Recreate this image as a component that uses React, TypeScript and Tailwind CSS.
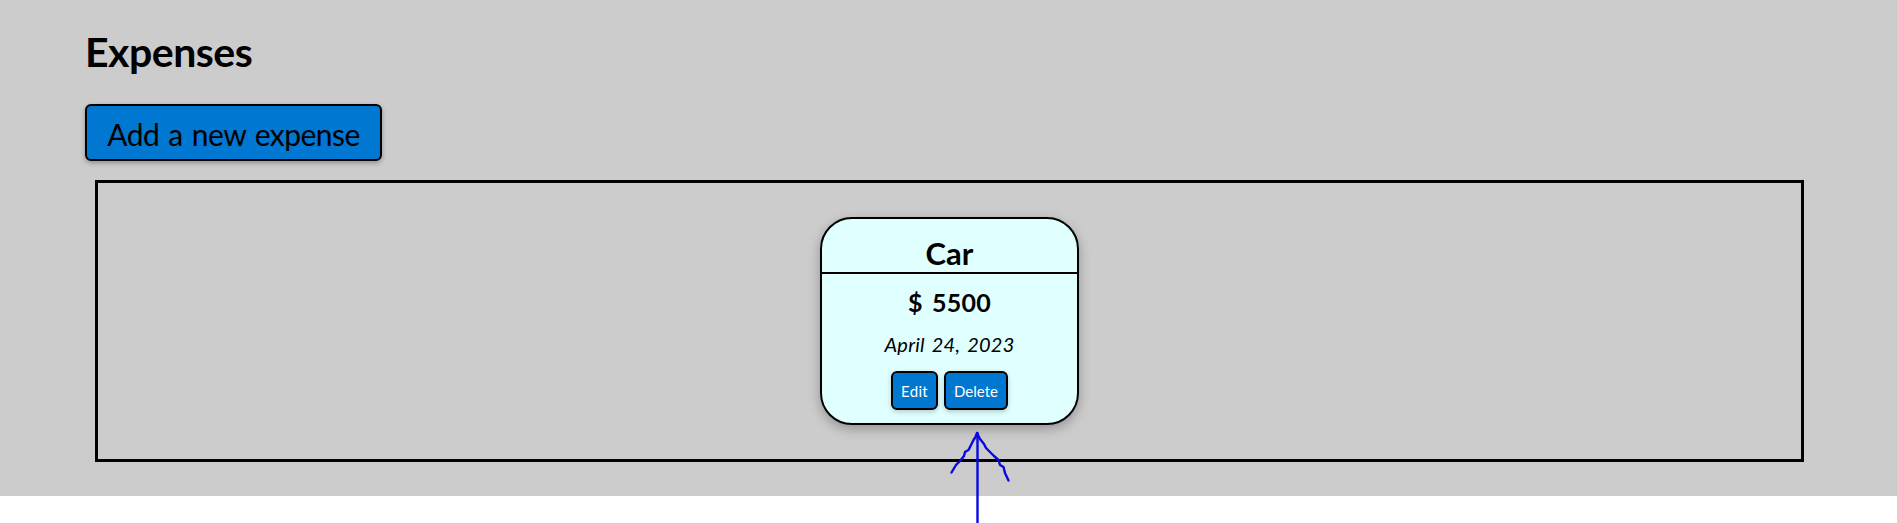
import React from "react";

type Expense = { title: string; amount: number; date: string };

const expenses: Expense[] = [{ title: "Car", amount: 5500, date: "April 24, 2023" }];

function ActionButton({ label, className }: { label: string; className: string }) {
  return (
    <button
      className={`h-[39px] rounded-[6px] border-2 border-black bg-[#0077d0] pt-[2px] text-center text-[15px] whitespace-nowrap text-white shadow-[0_2px_5px_rgba(0,0,0,0.2)] ${className}`}
    >
      {label}
    </button>
  );
}

function ExpenseCard({ expense }: { expense: Expense }) {
  return (
    <article className="flex h-[208px] w-[259px] flex-col items-center rounded-[32px] border-2 border-black bg-[#e0ffff] shadow-[0_4px_12px_rgba(0,0,0,0.28)]">
      <h2 className="h-[55px] w-full border-b-2 border-black pt-[13px] text-center text-[31px] leading-[42px] font-bold">
        {expense.title}
      </h2>
      <p className="mt-[11px] h-[34px] text-[25px] leading-[34px] font-bold tracking-[0.2px] [word-spacing:3px]">
        $ {expense.amount}
      </p>
      <p className="mt-[11px] h-[28px] text-[20px] leading-[28px] tracking-[0.25px] [word-spacing:2px] italic">
        {expense.date}
      </p>
      <div className="mt-[13px] flex gap-[6px]">
        <ActionButton label="Edit" className="w-[47px] tracking-[0.3px]" />
        <ActionButton label="Delete" className="w-[64px]" />
      </div>
    </article>
  );
}

function Arrow() {
  return (
    <svg
      className="pointer-events-none absolute top-[430px] left-[940px]"
      width="80"
      height="93"
      viewBox="0 0 80 93"
      fill="none"
      stroke="#0808e4"
      strokeWidth="2.4"
      strokeLinecap="round"
      strokeLinejoin="round"
    >
      <path d="M37.5 3V95" />
      <path d="M37 3L35.500 7L33.500 10L30 17L28.500 20L25 22L24 26L20 31L16 35L11.500 42.500" />
      <path d="M37.500 4L40 9L44 14L46 18L50 22L54 26L58.500 30L60 35L63.500 37L65 43L68.500 50.500" />
    </svg>
  );
}

export default function App() {
  return (
    <div className="relative h-[523px] overflow-hidden bg-white font-['Comic_Sans_MS','Lato',sans-serif] text-black">
      <main className="flex h-[496px] flex-col items-start bg-[#cccccc] pt-[25px] pr-[93px] pl-[85px]">
        <h1 className="h-[54px] text-[41px] leading-[54px] font-bold tracking-[-0.5px]">Expenses</h1>
        <button className="mt-[25px] h-[57px] w-[297px] rounded-[6px] border-2 border-black bg-[#0077d0] pt-[3px] text-[30px] leading-[48px] tracking-[-0.55px] whitespace-nowrap shadow-[0_2px_5px_rgba(0,0,0,0.3)] [word-spacing:2px]">
          Add a new expense
        </button>
        <section className="mt-[19px] ml-[10px] flex h-[282px] w-[1709px] justify-center border-[3px] border-black pt-[34px]">
          {expenses.map((e) => (
            <ExpenseCard key={e.title} expense={e} />
          ))}
        </section>
      </main>
      <Arrow />
    </div>
  );
}
